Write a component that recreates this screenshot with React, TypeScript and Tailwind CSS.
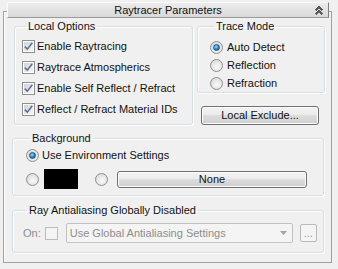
import React from "react";

const FONT = { fontFamily: '"Liberation Sans", Arial, sans-serif' };

function Check({ checked = false, disabled = false }: { checked?: boolean; disabled?: boolean }) {
  return (
    <span
      className={`flex size-[13px] shrink-0 items-center justify-center border ${
        disabled ? "border-[#bcbcbc] bg-[#f4f4f4]" : "border-[#8e8f8f] bg-white"
      }`}
    >
      <span
        className={`flex size-[9px] items-center justify-center ${
          disabled ? "bg-[#f4f4f4]" : "bg-[linear-gradient(135deg,#d2d2d2,#f6f6f6)]"
        }`}
      >
        {checked && (
          <svg width="9" height="9" viewBox="0 0 9 9" className="overflow-visible">
            <path d="M0.8 4.6 L3.3 7.1 L8.3 0.8" fill="none" stroke="#5a6d9a" strokeWidth="1.5" />
          </svg>
        )}
      </span>
    </span>
  );
}

function Radio({ on = false }: { on?: boolean }) {
  return (
    <span className="flex size-[13px] shrink-0 items-center justify-center rounded-full border border-[#8e8f8f] bg-[radial-gradient(circle_at_55%_60%,#fbfbfb,#e4e4e4_55%,#cfcfcf)]">
      {on && (
        <span className="size-[7px] rounded-full border border-[#1d5481] bg-[radial-gradient(circle_at_40%_35%,#9fdcfa,#2a7fbf_55%,#0f4f85)]" />
      )}
    </span>
  );
}

function Button({ label, className }: { label: string; className: string }) {
  return (
    <div
      className={`flex items-center justify-center rounded-[3px] border border-[#707070] bg-[linear-gradient(#f2f2f2,#ebebeb_50%,#dddddd_50%,#cfcfcf)] text-[11px] text-[#111] shadow-[inset_0_0_0_1px_#fcfcfc] ${className}`}
    >
      {label}
    </div>
  );
}

function Group({
  title,
  className,
  children,
}: {
  title: string;
  className: string;
  children: React.ReactNode;
}) {
  return (
    <fieldset
      className={`rounded-[3px] border border-[#d5dfe5] shadow-[inset_1px_1px_0_#ffffff,1px_1px_0_#ffffff] ${className}`}
    >
      <legend className="ml-[4px] px-[2px] text-[11px] leading-[14px] text-[#111]">{title}</legend>
      {children}
    </fieldset>
  );
}

export default function App() {
  return (
    <div
      className="h-[269px] w-[338px] overflow-hidden bg-[#f0f0f0] pt-[2px] text-[11px] text-[#111]"
      style={FONT}
    >
      {/* rollout title */}
      <div className="relative z-10 ml-[7px] flex h-[16px] w-[322px] items-center justify-center border-t border-l border-r border-b border-t-[#fafafa] border-l-[#fafafa] border-r-[#7e7e7e] border-b-[#9a9a9a] bg-[linear-gradient(#ececec,#d9d9d9)]">
        <span className="leading-none">Raytracer Parameters</span>
        <svg
          width="8"
          height="9"
          viewBox="0 0 8 9"
          className="absolute right-[5px] top-[3px]"
          shapeRendering="crispEdges"
        >
          <path d="M0.5 4.5 L4 1 L7.5 4.5" fill="none" stroke="#5a5a5a" strokeWidth="1.8" />
          <path d="M0.5 8.5 L4 5 L7.5 8.5" fill="none" stroke="#5a5a5a" strokeWidth="1.8" />
        </svg>
      </div>

      {/* rollout body */}
      <div className="-mt-[7px] ml-[3px] h-[252px] w-[329px] border border-[#a0a0a0] shadow-[inset_1px_1px_0_#ffffff]">
        <div className="ml-[10px] mt-[7px] flex gap-[4px]">
          <Group title="Local Options" className="w-[179px] pb-[3px] pl-[7px]">
            <div className="pt-[3px]">
              {[
                "Enable Raytracing",
                "Raytrace Atmospherics",
                "Enable Self Reflect / Refract",
                "Reflect / Refract Material IDs",
              ].map((t) => (
                <div key={t} className="flex h-[21px] items-center gap-[2px]">
                  <Check checked />
                  <span>{t}</span>
                </div>
              ))}
            </div>
          </Group>

          <div className="flex w-[128px] flex-col">
            <Group title="Trace Mode" className="w-[128px] pl-[12px]">
              <div className="pt-[5px]">
                {[
                  ["Auto Detect", true],
                  ["Reflection", false],
                  ["Refraction", false],
                ].map(([t, on]) => (
                  <div key={t as string} className="flex h-[18px] items-center gap-[4px]">
                    <Radio on={on as boolean} />
                    <span>{t as string}</span>
                  </div>
                ))}
              </div>
            </Group>
            <Button label="Local Exclude..." className="ml-[4px] mt-[13px] h-[19px] w-[118px]" />
          </div>
        </div>

        <Group title="Background" className="ml-[8px] mt-[6px] w-[312px] pb-[6px] pl-[13px]">
          <div className="flex h-[18px] items-center gap-[3px] pt-[2px]">
            <Radio on />
            <span>Use Environment Settings</span>
          </div>
          <div className="mt-[6px] flex h-[20px] items-center">
            <Radio />
            <div className="ml-[5px] h-[20px] w-[34px] bg-black" />
            <div className="ml-[17px]">
              <Radio />
            </div>
            <Button label="None" className="ml-[9px] h-[17px] w-[190px]" />
          </div>
        </Group>

        <Group
          title="Ray Antialiasing Globally Disabled"
          className="ml-[8px] mt-[7px] w-[312px] pb-[9px] pl-[10px]"
        >
          <div className="mt-[6px] flex h-[20px] items-center text-[#8d8d8d]">
            <span>On:</span>
            <span className="ml-[4px]">
              <Check disabled />
            </span>
            <div className="ml-[8px] flex h-[20px] w-[227px] items-center justify-between rounded-[2px] border border-[#c2c2c2] bg-[#f4f4f4] pl-[3px] pr-[5px]">
              <span>Use Global Antialiasing Settings</span>
              <svg width="7" height="4" viewBox="0 0 7 4">
                <path d="M0 0 H7 L3.5 4 Z" fill="#a3a3a3" />
              </svg>
            </div>
            <div className="ml-[7px] flex h-[18px] w-[17px] items-center justify-center rounded-[2px] border border-[#b9b9b9] bg-[#f4f4f4] text-[#8a8aa8]">
              ...
            </div>
          </div>
        </Group>
      </div>
    </div>
  );
}
